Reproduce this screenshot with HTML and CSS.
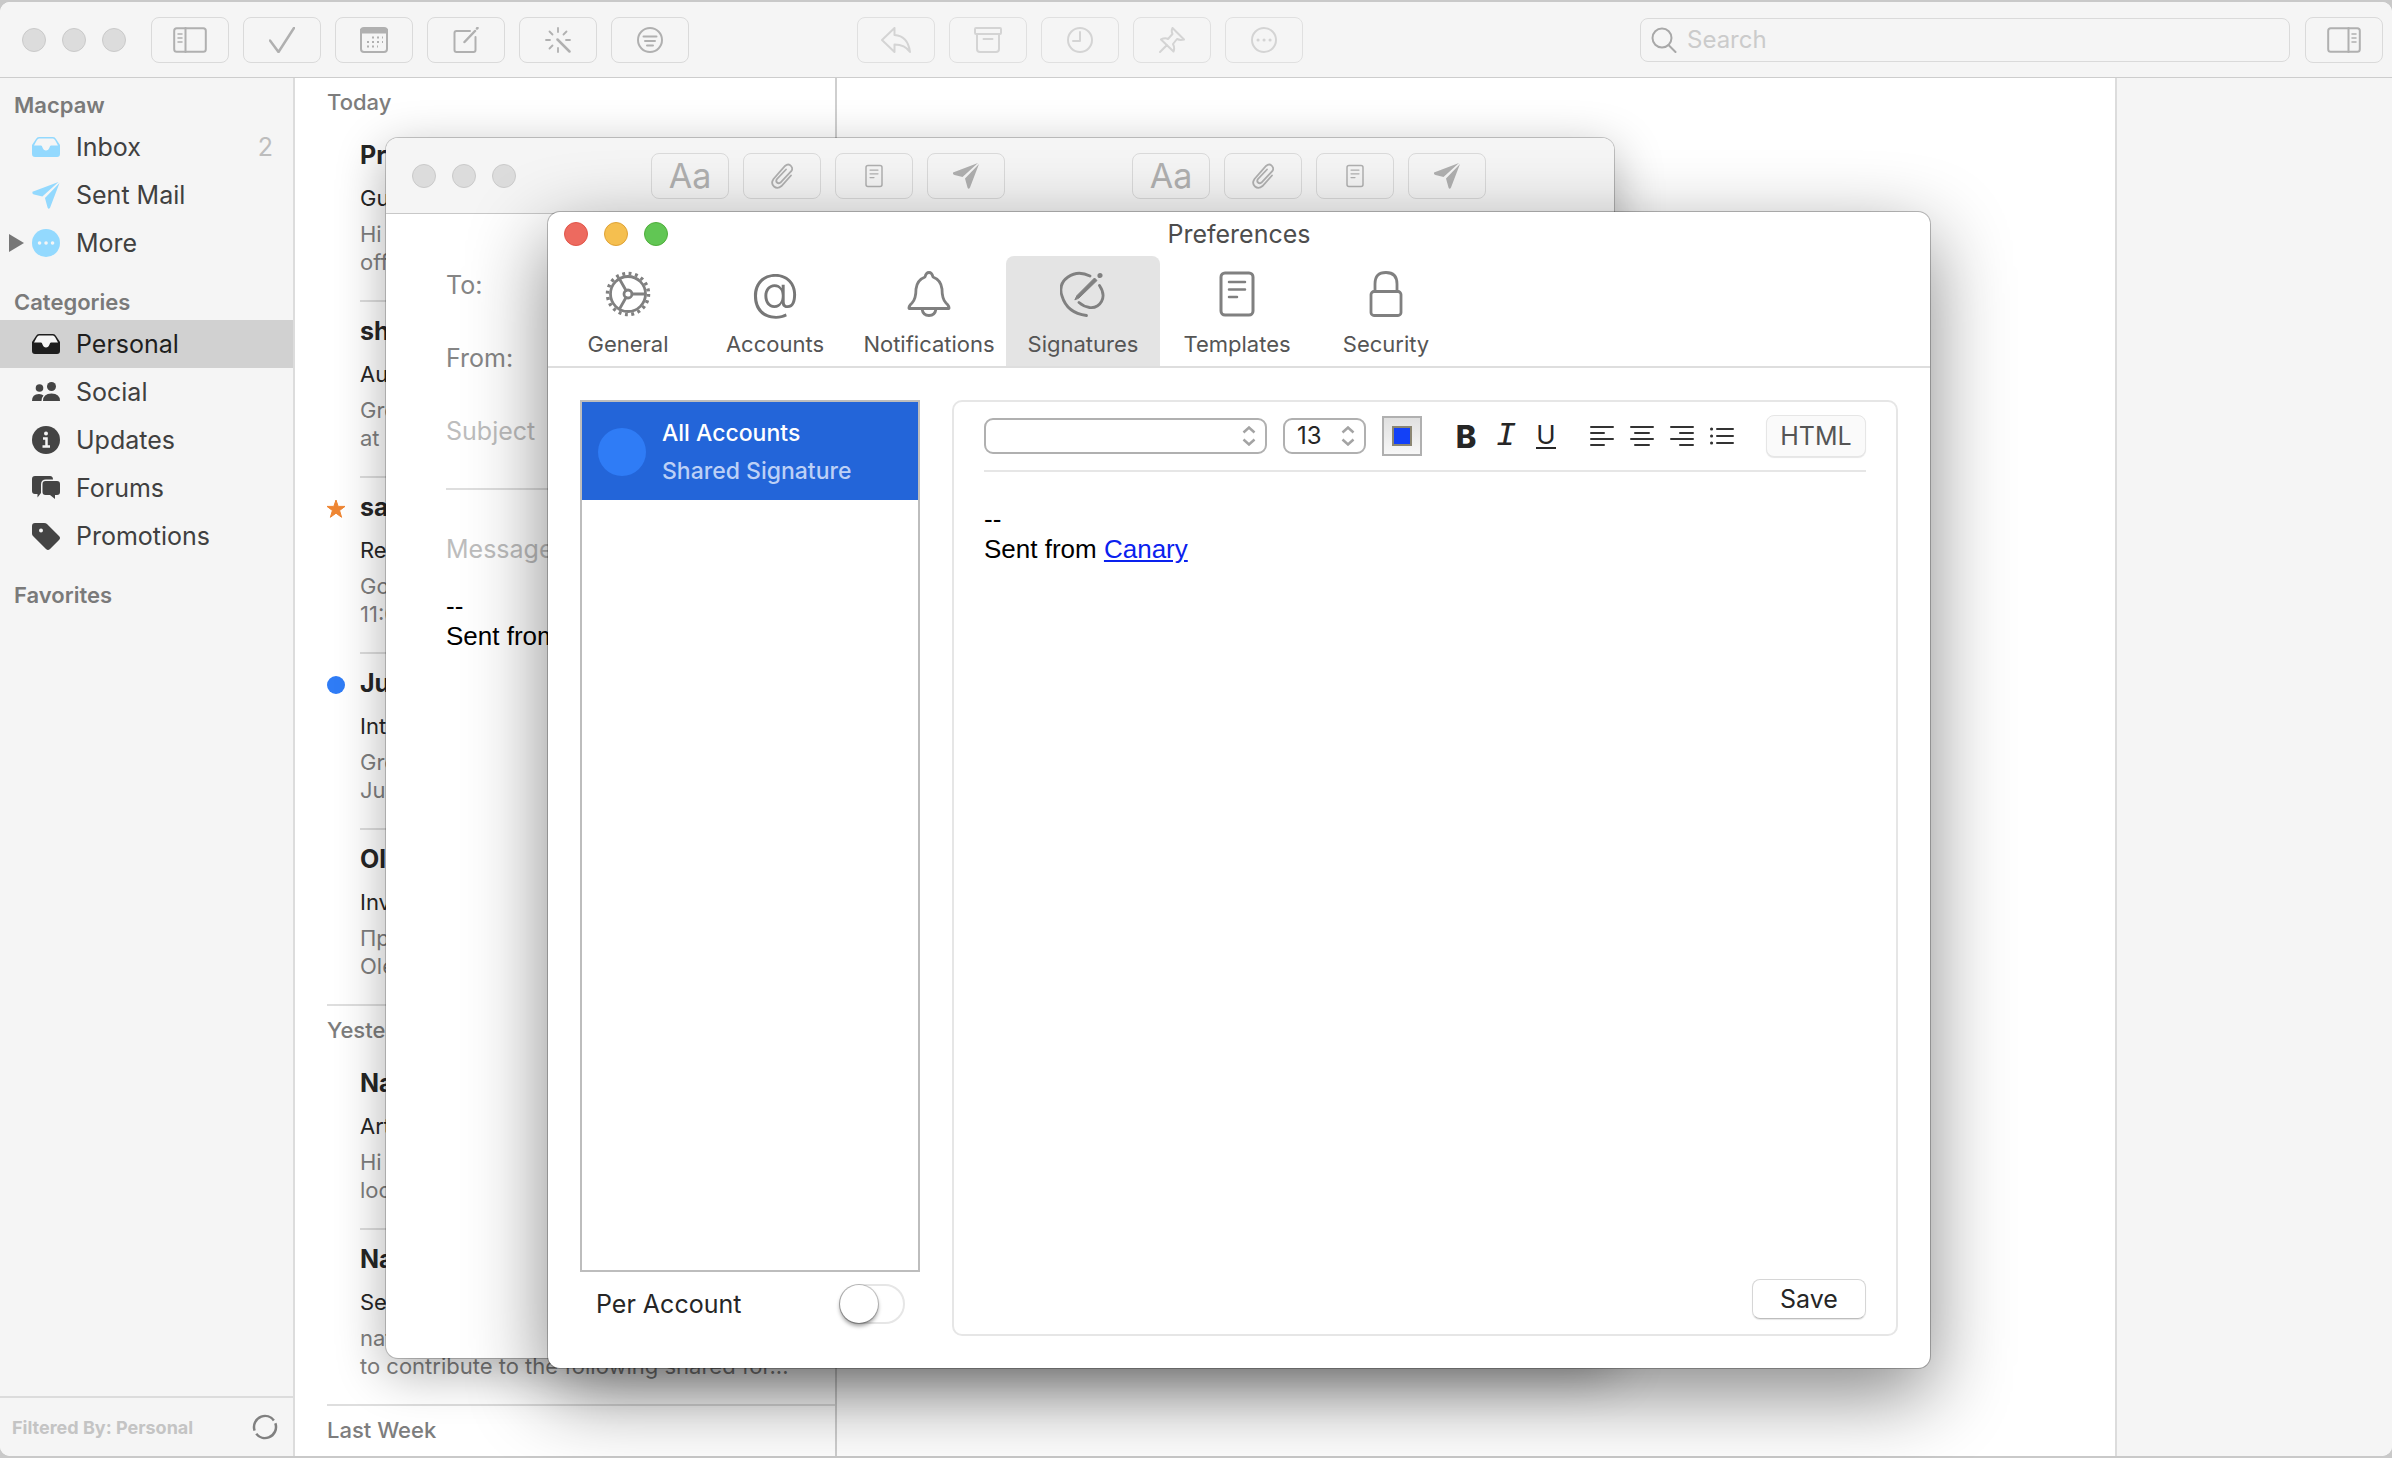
FILE: index.html
```html
<!DOCTYPE html>
<html lang="en">
<head>
  <meta charset="UTF-8" />
  <title>Canary Mail</title>
  <link rel="stylesheet" href="styles.css">
</head>
<body>

  <!-- Shared icons -->
  <svg class="sprite" aria-hidden="true">
    <symbol id="i-inbox" viewBox="0 0 28 20">
      <path d="M7 0h14q2 0 3 2l4 6v9q0 3-3 3H3q-3 0-3-3V8l4-6q1-2 3-2z" fill="currentColor"/>
      <path class="cut" d="M7 1.500h14q1 0 2 1.500l3 5.500h-7q-1 0-1.500 2-1 3-3.500 3t-3.500-3q-.5-2-1.500-2H2l3-5.500q1-1.500 2-1.500z"/>
    </symbol>
    <symbol id="i-plane" viewBox="0 0 26 26">
      <path d="M25 0L0 9.500q-.5 2 1.500 2.500l8 2zM26 1L12 15.500l2.500 9q1 2.500 2.500 0z" fill="currentColor"/>
    </symbol>
    <symbol id="i-clip" viewBox="0 0 22 26">
      <path d="M20 12.500l-9.500 10.500q-4 3.500-7.500.5t-.5-7.500L14 3q3.500-3 6 0t0 5.500L9.500 19.500q-2 1.500-3.500 0t0-3.500l9-9.500" fill="none" stroke="currentColor" stroke-width="1.800" stroke-linecap="round"/>
    </symbol>
    <symbol id="i-doc" viewBox="0 0 36 46">
      <g fill="none" stroke="currentColor" stroke-width="3" stroke-linecap="round">
        <rect x="2" y="2" width="32" height="42" rx="4"/>
        <path d="M10 11h16M10 18.500h16M10 26h8" stroke-width="2.500"/>
      </g>
    </symbol>
  </svg>

  <div class="app">

    <!-- Main toolbar -->
    <header class="toolbar">
      <div class="lights"><i></i><i></i><i></i></div>
      <div class="tools main-tools">
        <button class="tool" aria-label="Toggle sidebar"><svg width="34" height="26" viewBox="0 0 34 26"><rect x="1.200" y="1.200" width="31.600" height="23.600" rx="2.500"/><path d="M12.500 1v24"/><path d="M5 7h4M5 11h4M5 15h4" stroke-width="1.500"/></svg></button>
        <button class="tool" aria-label="Mark done"><svg width="26" height="26" viewBox="0 0 26 26"><path d="M1 13.500L9.500 25 25 1" stroke-width="2.500"/></svg></button>
        <button class="tool" aria-label="Calendar"><svg width="28" height="26" viewBox="0 0 28 26"><rect x="1" y="1" width="26" height="24" rx="3"/><path d="M2 4h24" stroke-width="5"/><path d="M12 10.500h11M7 15h16M7 19.500h11" stroke-dasharray="2 3" stroke-linecap="butt"/></svg></button>
        <button class="tool" aria-label="New message"><svg width="26" height="26" viewBox="0 0 26 26"><path d="M17 4H3.500Q1.500 4 1.500 6v17q0 2 2 2h17q2 0 2-2V10"/><path d="M11.500 15L22 4M24 1.500l.5-.5" stroke-width="2.500"/></svg></button>
        <button class="tool" aria-label="Clean up"><svg width="26" height="26" viewBox="0 0 26 26"><path d="M13 1v4M13 21v4M1 13h4M21 13h4M4.500 4.500l3 3M21.500 4.500l-3 3M4.500 21.500l3-3" stroke-width="1.800"/><path d="M12.500 12.500l12 12" stroke-width="2.500"/></svg></button>
        <button class="tool" aria-label="Filter"><svg width="26" height="26" viewBox="0 0 26 26"><circle cx="13" cy="13" r="12"/><path d="M6.500 9.500h13M8 14h10M10 18.500h6"/></svg></button>
      </div>
      <div class="tools mail-tools">
        <button class="tool" disabled aria-label="Reply"><svg width="30" height="26" viewBox="0 0 30 26"><path d="M1 13L13.500 1v7Q27 9 29 25q-5-7.500-15.500-7.500V25z"/></svg></button>
        <button class="tool" disabled aria-label="Archive"><svg width="28" height="26" viewBox="0 0 28 26"><rect x="1" y="1" width="26" height="6" rx="1"/><path d="M3 7v15q0 3 3 3h16q3 0 3-3V7M9.500 12h9"/></svg></button>
        <button class="tool" disabled aria-label="Snooze"><svg width="26" height="26" viewBox="0 0 26 26"><circle cx="13" cy="13" r="12"/><path d="M13 5v9H6"/></svg></button>
        <button class="tool" disabled aria-label="Pin"><svg width="26" height="26" viewBox="0 0 26 26"><path d="M13.500 1L25 12.500q-4 1-7-.5l-4 5q2 4 .5 7.500L2 12.500q4-2 7-.5l4.500-5q-1.500-3 0-6zM8 18l-7 7"/></svg></button>
        <button class="tool" disabled aria-label="More actions"><svg width="26" height="26" viewBox="0 0 26 26"><circle cx="13" cy="13" r="12"/><path d="M7 13h.1M13 13h.1M19 13h.1" stroke-width="3"/></svg></button>
      </div>
      <label class="search">
        <svg width="26" height="26" viewBox="0 0 26 26"><circle cx="11" cy="11" r="9.500"/><path d="M17.500 18l7 7"/></svg>
        <input type="search" placeholder="Search" aria-label="Search">
      </label>
      <button class="tool" aria-label="Toggle details"><svg width="34" height="26" viewBox="0 0 34 26"><rect x="1.200" y="1.200" width="31.600" height="23.600" rx="2.500"/><path d="M21.500 1v24"/><path d="M25 7h4M25 11h4M25 15h4" stroke-width="1.500"/></svg></button>
    </header>

    <div class="panes">

      <!-- Sidebar -->
      <nav class="sidebar">
        <h2>Macpaw</h2>
        <a class="folder" href="#inbox"><svg class="sky" width="28" height="20"><use href="#i-inbox"/></svg>Inbox <span class="count">2</span></a>
        <a class="folder" href="#sent"><svg class="sky" width="28" height="27"><use href="#i-plane"/></svg>Sent Mail</a>
        <a class="folder more" href="#more"><svg class="sky" width="28" height="28" viewBox="0 0 28 28"><circle cx="14" cy="14" r="14" fill="currentColor"/><path d="M7.500 14h.1M14 14h.1M20.500 14h.1" stroke="#f5f5f5" stroke-width="3.500" stroke-linecap="round"/></svg>More</a>

        <h2>Categories</h2>
        <a class="folder current" href="#personal"><svg width="28" height="20"><use href="#i-inbox"/></svg>Personal</a>
        <a class="folder" href="#social"><svg width="28" height="20" viewBox="0 0 28 20"><g fill="currentColor"><circle cx="7.500" cy="6" r="3.800"/><circle cx="19.500" cy="4.500" r="4.500"/><path d="M0 19q0-7 7-7 3 0 4.500 1.500Q9.500 15.500 9.500 19zM11 19q0-7.500 8.500-7.500T28 19z"/></g></svg>Social</a>
        <a class="folder" href="#updates"><svg width="28" height="28" viewBox="0 0 28 28"><circle cx="14" cy="14" r="14" fill="currentColor"/><circle cx="14" cy="7.500" r="2" fill="#f5f5f5"/><path d="M11 12.500h3.500v8M10.500 20.500h7.500" stroke="#f5f5f5" stroke-width="2.500" fill="none"/></svg>Updates</a>
        <a class="folder" href="#forums"><svg width="28" height="24" viewBox="0 0 28 24"><g fill="currentColor"><path d="M3 0h15q3 0 3 3.500h-7q-5 0-5 5V17l-3.500 4.500V18H3q-3 0-3-3V3q0-3 3-3z"/><path d="M13.500 5H25q3 0 3 3v8q0 3-3 3h-2v4l-5-4h-4.500q-3 0-3-3V8q0-3 3-3z"/></g></svg>Forums</a>
        <a class="folder" href="#promotions"><svg width="28" height="28" viewBox="0 0 28 28"><path d="M2 1h10q2 0 3 1l12 12q2 2 0 4l-9 9q-2 2-4 0L1 14q-1-1-1-2.500V4q0-3 3-3z" fill="currentColor"/><circle cx="9" cy="8.500" r="2" fill="#f5f5f5"/></svg>Promotions</a>

        <h2>Favorites</h2>

        <footer class="filter-bar">
          <span>Filtered By: Personal</span>
          <button aria-label="Refresh"><svg width="26" height="26" viewBox="0 0 26 26"><circle cx="13" cy="13" r="11" fill="none" stroke="#808080" stroke-width="2.500" stroke-dasharray="31 3.560" transform="rotate(-20 13 13)"/></svg></button>
        </footer>
      </nav>

      <!-- Message list -->
      <main class="messages">
        <h2>Today</h2>
        <ul>
          <li>
            <h3>Preply</h3>
            <h4>Guide</h4>
            <p>Hi<br>offers</p>
          </li>
          <li>
            <h3>sharing</h3>
            <h4>Audit</h4>
            <p>Greetings<br>at</p>
          </li>
          <li>
            <svg class="mark" width="18" height="18" viewBox="0 0 18 18"><path d="M9 0l2.200 6.400H18l-5.400 4.100 2 6.800L9 13.200l-5.600 4.100 2-6.800L0 6.400h6.800z" fill="#ef8633" stroke="#ef8633"/></svg>
            <h3>sales</h3>
            <h4>Reply</h4>
            <p>Good<br>11:00</p>
          </li>
          <li>
            <svg class="mark" width="18" height="18" viewBox="0 0 18 18"><circle cx="9" cy="9" r="9" fill="#2f7cf6"/></svg>
            <h3>Julia</h3>
            <h4>Intro</h4>
            <p>Greetings<br>Julia</p>
          </li>
          <li>
            <h3>Oleh</h3>
            <h4>Invite</h4>
            <p>Привіт<br>Oleh</p>
          </li>
        </ul>
        <h2>Yesterday</h2>
        <ul>
          <li>
            <h3>Natalia</h3>
            <h4>Article</h4>
            <p>Hi<br>look</p>
          </li>
          <li>
            <h3>Natalia</h3>
            <h4>Sections</h4>
            <p>natalia<br>to contribute to the following shared for...</p>
          </li>
        </ul>
        <h2>Last Week</h2>
      </main>

      <section class="reader"></section>
      <aside class="details"></aside>
    </div>
  </div>

  <!-- Compose window -->
  <section class="window compose">
    <header class="compose-bar">
      <div class="lights"><i></i><i></i><i></i></div>
      <div class="tools left-tools">
        <button class="tool letters">Aa</button>
        <button class="tool" aria-label="Attach"><svg width="22" height="26"><use href="#i-clip"/></svg></button>
        <button class="tool" aria-label="Template"><svg width="18" height="24"><use href="#i-doc"/></svg></button>
        <button class="tool" aria-label="Send"><svg width="26" height="26"><use href="#i-plane"/></svg></button>
      </div>
      <div class="tools right-tools">
        <button class="tool letters">Aa</button>
        <button class="tool" aria-label="Attach"><svg width="22" height="26"><use href="#i-clip"/></svg></button>
        <button class="tool" aria-label="Template"><svg width="18" height="24"><use href="#i-doc"/></svg></button>
        <button class="tool" aria-label="Send"><svg width="26" height="26"><use href="#i-plane"/></svg></button>
      </div>
    </header>
    <form class="compose-form">
      <div class="field"><label for="to">To:</label><input type="text" id="to"></div>
      <div class="field"><label for="from">From:</label><input type="text" id="from"></div>
      <div class="field"><input type="text" placeholder="Subject" aria-label="Subject"></div>
      <hr>
      <div class="field"><input type="text" placeholder="Message" aria-label="Message"></div>
      <div class="signature">--<br>Sent from <a href="#canary">Canary</a></div>
    </form>
  </section>

  <!-- Preferences window -->
  <section class="window prefs">
    <header class="prefs-bar">
      <div class="lights active"><i></i><i></i><i></i></div>
      <h1>Preferences</h1>
    </header>
    <nav class="tabs">
      <button>
        <svg width="46" height="46" viewBox="0 0 46 46"><circle cx="23" cy="23" r="17.500" stroke-width="2.800"/><circle cx="23" cy="23" r="20.500" stroke-width="3.500" stroke-dasharray="2.900 3.540" stroke-linecap="butt"/><circle cx="23" cy="23" r="4"/><path d="M27 23h13M21 19.500L14.500 8M21 26.500L14.500 38"/></svg>
        General
      </button>
      <button>
        <span class="at" aria-hidden="true">@</span>
        Accounts
      </button>
      <button>
        <svg width="46" height="46" viewBox="0 0 46 46"><path d="M23 1.500q3 0 4 4.500 8 3 9 12 0 10 4 14 3.500 3 3 5.500H3q-.5-2.500 3-5.500 4-4 4-14 1-9 9-12 1-4.500 4-4.500zM16 38q1 6.500 7 6.500t7-6.500"/></svg>
        Notifications
      </button>
      <button class="selected">
        <svg width="46" height="46" viewBox="0 0 46 46"><path d="M30 5Q18-1 8 6T2 25q5 17 24.500 19.500M39.500 14.500q6 9 2 16t-12 6q-6-1-10.500-5"/><path d="M15 28.500l2-4L34.500 7l2.500 2.500L19 27z" fill="currentColor" stroke-width="1"/><circle cx="40" cy="4.500" r="1.200" fill="currentColor"/></svg>
        Signatures
      </button>
      <button>
        <svg width="36" height="46"><use href="#i-doc"/></svg>
        Templates
      </button>
      <button>
        <svg width="34" height="46" viewBox="0 0 34 46"><rect x="2" y="20.500" width="30" height="24" rx="3"/><path d="M6 20v-7Q6 1.500 17 1.500T28 13v7"/></svg>
        Security
      </button>
    </nav>

    <div class="prefs-body">
      <div class="accounts">
        <ul class="account-list">
          <li>
            <span class="avatar"></span>
            <div>
              <strong>All Accounts</strong>
              <small>Shared Signature</small>
            </div>
          </li>
        </ul>
        <label class="per-account">Per Account <input type="checkbox"></label>
      </div>

      <div class="editor">
        <div class="format-bar">
          <label class="picker font-picker">
            <select aria-label="Font"><option></option></select>
            <svg width="14" height="20" viewBox="0 0 14 20"><path d="M1.500 6.500L7 1.500l5.500 5M1.500 13.500l5.500 5 5.500-5"/></svg>
          </label>
          <label class="picker size-picker">
            <select aria-label="Font size"><option>13</option></select>
            <svg width="14" height="20" viewBox="0 0 14 20"><path d="M1.500 6.500L7 1.500l5.500 5M1.500 13.500l5.500 5 5.500-5"/></svg>
          </label>
          <input type="color" value="#1341f7" aria-label="Text color">
          <div class="styles">
            <button class="bold">B</button>
            <button class="italic">I</button>
            <button class="underline"><span>U</span></button>
          </div>
          <div class="styles">
            <button aria-label="Align left"><svg width="24" height="24" viewBox="0 0 24 24"><path d="M1 3h22M1 9h13M1 15h22M1 21h13"/></svg></button>
            <button aria-label="Align center"><svg width="24" height="24" viewBox="0 0 24 24"><path d="M1 3h22M5 9h14M1 15h22M5 21h14"/></svg></button>
            <button aria-label="Align right"><svg width="24" height="24" viewBox="0 0 24 24"><path d="M1 3h22M10 9h13M1 15h22M10 21h13"/></svg></button>
            <button aria-label="List"><svg width="24" height="24" viewBox="0 0 24 24"><path d="M7 5h16M7 12h16M7 19h16"/><path d="M1.500 5h.1M1.500 12h.1M1.500 19h.1" stroke-width="3"/></svg></button>
          </div>
          <button class="html">HTML</button>
        </div>
        <div class="signature">--<br>Sent from <a href="#canary">Canary</a></div>
        <button class="save">Save</button>
      </div>
    </div>
  </section>

</body>
</html>
```
FILE: styles.css
```css
* {
  box-sizing: border-box;
}

body {
  margin: 0;
  height: 100vh;
  overflow: hidden;
  position: relative;
  padding: 2px 0;
  background-color: #c9c9c9;
  font-family: Inter, "Liberation Sans", sans-serif;
  font-size: 25px;
  color: #262626;
}

h1, h2, h3, h4, p, ul {
  margin: 0;
  padding: 0;
  font-weight: 400;
}

ul {
  list-style: none;
}

a {
  color: inherit;
  text-decoration: none;
}

button, input, select {
  margin: 0;
  padding: 0;
  border: 0;
  background: none;
  outline: none;
  font: inherit;
  color: inherit;
}

svg {
  flex: none;
}

.sprite {
  position: absolute;
  width: 0;
  height: 0;
}

.app {
  height: 100%;
  display: flex;
  flex-direction: column;
  border-radius: 10px;
  overflow: hidden;
  background-color: #fff;
}

/* Toolbars */
.toolbar {
  display: flex;
  align-items: center;
  height: 76px;
  padding: 0 9px 0 22px;
  background-color: #f5f5f5;
  border-bottom: 1px solid #cdcdcd;
}

.lights {
  display: flex;
  gap: 16px;
}

.lights i {
  width: 24px;
  height: 24px;
  border-radius: 50%;
  background-color: #dcdcdc;
  border: 1px solid #cacaca;
}

.active i:nth-child(1) { background-color: #ed6a5f; border-color: #e05549; }
.active i:nth-child(2) { background-color: #f5bf4f; border-color: #dea236; }
.active i:nth-child(3) { background-color: #61c654; border-color: #4fad3b; }

.tools {
  display: flex;
  gap: 14px;
}

.main-tools {
  margin-left: 25px;
}

.mail-tools {
  margin-left: 168px;
}

.tool {
  width: 78px;
  height: 46px;
  display: flex;
  align-items: center;
  justify-content: center;
  border: 1px solid #dadada;
  border-radius: 8px;
  color: #b0b0b0;
}

.tool:disabled {
  color: #d4d4d4;
  border-color: #e0e0e0;
}

.toolbar svg {
  fill: none;
  stroke: currentColor;
  stroke-width: 2;
  stroke-linecap: round;
  stroke-linejoin: round;
}

.letters {
  font-size: 34px;
}

.search {
  flex: 1;
  display: flex;
  align-items: center;
  gap: 10px;
  height: 44px;
  margin-left: 337px;
  margin-right: 15px;
  padding-left: 10px;
  border: 1px solid #dadada;
  border-radius: 8px;
  color: #a8a8a8;
}

.search input {
  flex: 1;
  font-size: 24px;
}

.search input::placeholder {
  color: #cbcbcb;
}

/* Panes */
.panes {
  flex: 1;
  min-height: 0;
  display: flex;
}

.sidebar {
  width: 295px;
  display: flex;
  flex-direction: column;
  background-color: #f5f5f5;
  border-right: 2px solid #dcdcdc;
}

.sidebar h2 {
  padding: 12px 14px 0;
  margin-bottom: 3px;
  font-size: 22px;
  line-height: 30px;
  font-weight: 600;
  color: #7a7a7a;
}

.folder + h2 {
  padding-top: 20px;
}

.folder {
  position: relative;
  display: flex;
  align-items: center;
  gap: 16px;
  height: 48px;
  padding: 0 20px 0 32px;
  color: #404040;
}

.folder svg {
  color: #444;
}

.folder .sky {
  color: #93d9fe;
}

.cut {
  fill: #f5f5f5;
}

.current {
  background-color: #d1d1d1;
  color: #1e1e1e;
}

.folder.current svg {
  color: #1e1e1e;
}

.count {
  margin-left: auto;
  color: #bdbdbd;
}

.more::before {
  content: "";
  position: absolute;
  left: 9px;
  border-left: 15px solid #777;
  border-top: 9px solid transparent;
  border-bottom: 9px solid transparent;
}

.filter-bar {
  display: flex;
  align-items: center;
  justify-content: space-between;
  height: 60px;
  margin-top: auto;
  padding: 0 15px 0 12px;
  border-top: 2px solid #dcdcdc;
  font-size: 18px;
  font-weight: 700;
  color: #c4c4c4;
}

.filter-bar button {
  display: flex;
}

.messages {
  width: 542px;
  overflow: hidden;
  padding-left: 32px;
  border-right: 2px solid #cfcfcf;
}

.messages h2 {
  height: 48px;
  line-height: 48px;
  font-size: 22px;
  font-weight: 500;
  color: #7d7d7d;
}

.messages ul {
  border-bottom: 2px solid #dedede;
}

.messages li {
  position: relative;
  height: 176px;
  margin-left: 33px;
  padding-top: 13px;
  border-bottom: 2px solid #dedede;
}

.messages li:last-child {
  height: 174px;
  border-bottom: 0;
}

.messages h3 {
  font-size: 25px;
  line-height: 32px;
  font-weight: 700;
}

.messages h4 {
  margin: 13px 0 8px;
  font-size: 22px;
  line-height: 28px;
}

.messages p {
  font-size: 22px;
  line-height: 28px;
  color: #7f7f7f;
}

.mark {
  position: absolute;
  left: -33px;
  top: 22px;
  overflow: visible;
}

.reader {
  flex: 1;
}

.details {
  width: 277px;
  background-color: #f5f5f5;
  border-left: 2px solid #dcdcdc;
}

/* Floating windows */
.window {
  position: absolute;
  display: flex;
  flex-direction: column;
  overflow: hidden;
  border-radius: 12px;
  background-color: #fff;
}

.compose {
  left: 386px;
  right: 778px;
  top: 138px;
  bottom: 100px;
  box-shadow: 0 0 0 1px rgba(0, 0, 0, 0.2), 0 14px 50px rgba(0, 0, 0, 0.32);
}

.compose-bar {
  display: flex;
  align-items: center;
  height: 76px;
  padding: 0 128px 0 26px;
  background-color: #f5f5f5;
  border-bottom: 1px solid #c8c8c8;
}

.left-tools {
  margin-left: 135px;
}

.right-tools {
  margin-left: auto;
}

.compose-form {
  padding: 51px 60px;
  color: #858585;
}

.field {
  display: flex;
  gap: 10px;
  height: 40px;
  margin-bottom: 33px;
}

.field label {
  line-height: 40px;
}

.field input {
  flex: 1;
}

.field input::placeholder {
  color: #bdbdbd;
}

.compose-form hr {
  height: 2px;
  margin: 37px 0 39px;
  border: 0;
  background-color: #dedede;
}

.compose-form hr + .field {
  margin-bottom: 22px;
}

.signature {
  font-family: "Liberation Sans", Arial, sans-serif;
  font-size: 26px;
  line-height: 30px;
  color: #000;
}

.signature a {
  color: #0a21ee;
  text-decoration: underline;
}

/* Preferences */
.prefs {
  left: 548px;
  right: 462px;
  top: 212px;
  bottom: 90px;
  box-shadow: 0 0 0 1px rgba(0, 0, 0, 0.25), 0 26px 80px rgba(0, 0, 0, 0.48);
}

.prefs-bar {
  display: grid;
  grid-template-columns: 1fr auto 1fr;
  align-items: center;
  height: 44px;
  padding: 0 16px;
}

.prefs-bar h1 {
  font-size: 25px;
  color: #4d4d4d;
}

.tabs {
  display: flex;
  padding-left: 10px;
  border-bottom: 2px solid #dedede;
}

.tabs button {
  width: 154px;
  height: 110px;
  display: flex;
  flex-direction: column;
  align-items: center;
  gap: 13px;
  padding-top: 15px;
  font-size: 22px;
  line-height: 28px;
  color: #555;
}

.tabs button:first-child {
  width: 140px;
}

.tabs button:last-child {
  width: 144px;
}

.tabs .selected {
  border-radius: 8px 8px 0 0;
  background-color: #e4e4e4;
}

.tabs svg {
  fill: none;
  stroke: currentColor;
  stroke-width: 2.8px;
  stroke-linecap: round;
  stroke-linejoin: round;
  color: #808080;
}

.at {
  height: 46px;
  font-size: 50px;
  font-weight: 300;
  line-height: 40px;
  color: #777;
}

.prefs-body {
  flex: 1;
  display: flex;
  gap: 32px;
  padding: 32px;
}

.accounts {
  width: 340px;
  display: flex;
  flex-direction: column;
}

.account-list {
  flex: 1;
  border: 2px solid #bdbdbd;
}

.account-list li {
  display: flex;
  align-items: center;
  gap: 16px;
  height: 98px;
  padding: 2px 0 0 16px;
  background-color: #2365d9;
}

.avatar {
  width: 48px;
  height: 48px;
  border-radius: 50%;
  background-color: #2f7cf6;
}

.account-list strong,
.account-list small {
  display: block;
  font-size: 23px;
  line-height: 38px;
  font-weight: 500;
  color: #fff;
}

.account-list small {
  color: #bcd0f6;
}

.per-account {
  display: flex;
  align-items: center;
  justify-content: space-between;
  height: 64px;
  padding: 0 15px 0 16px;
}

.per-account input {
  appearance: none;
  width: 66px;
  height: 40px;
  border: 2px solid #e6e6e6;
  border-radius: 20px;
}

.per-account input::before {
  content: "";
  display: block;
  width: 38px;
  height: 38px;
  margin: -1px;
  border-radius: 50%;
  background-color: #fff;
  box-shadow: 0 0 0 1px rgba(0, 0, 0, 0.2), 0 3px 4px rgba(0, 0, 0, 0.4);
}

.per-account input:checked::before {
  margin-left: 25px;
}

.editor {
  flex: 1;
  display: flex;
  flex-direction: column;
  padding: 0 30px 15px;
  border: 2px solid #e6e6e6;
  border-radius: 10px;
}

.format-bar {
  display: flex;
  align-items: center;
  height: 70px;
  gap: 16px;
  border-bottom: 2px solid #e6e6e6;
}

.picker {
  display: grid;
  align-items: center;
}

.picker select {
  grid-area: 1 / 1;
  appearance: none;
  width: 100%;
  height: 36px;
  padding-left: 12px;
  border: 2px solid #b0b0b0;
  border-radius: 9px;
  font-size: 24px;
  line-height: 30px;
}

.picker svg {
  grid-area: 1 / 1;
  justify-self: end;
  margin-right: 11px;
  fill: none;
  stroke: #a3a3a3;
  stroke-width: 2.5px;
  pointer-events: none;
}

.font-picker {
  flex: 1;
}

.size-picker {
  width: 83px;
}

.format-bar input {
  width: 40px;
  height: 40px;
  border: 2px solid #b0b0b0;
  background-image: linear-gradient(#e0e0e0, #f7f7f7);
}

.format-bar input::-webkit-color-swatch-wrapper {
  padding: 8px;
}

.format-bar input::-webkit-color-swatch {
  border: 2px solid #8b8672;
  border-radius: 0;
}

.styles {
  display: flex;
  gap: 16px;
  margin-left: 16px;
}

.styles button {
  width: 24px;
  height: 36px;
  display: flex;
  align-items: center;
  justify-content: center;
}

.styles svg {
  stroke: #333;
  stroke-width: 2;
  stroke-linecap: round;
}

.bold {
  font-size: 31px;
  font-weight: 800;
}

.italic {
  font-family: "Liberation Mono", monospace;
  font-size: 34px;
  font-style: italic;
}

.underline {
  font-size: 26px;
}

.underline span {
  line-height: 24px;
  border-bottom: 2px solid #262626;
}

.html, .save {
  border: 1px solid #d6d6d6;
  border-bottom-color: #bdbdbd;
  border-radius: 8px;
  box-shadow: 0 1px 1px rgba(0, 0, 0, 0.1);
}

.html {
  width: 100px;
  height: 42px;
  margin-left: 16px;
  border-color: #e6e6e6;
  background-color: #fafafa;
  color: #555;
}

.editor .signature {
  flex: 1;
  padding-top: 32px;
}

.save {
  align-self: flex-end;
  width: 114px;
  height: 40px;
}
```
